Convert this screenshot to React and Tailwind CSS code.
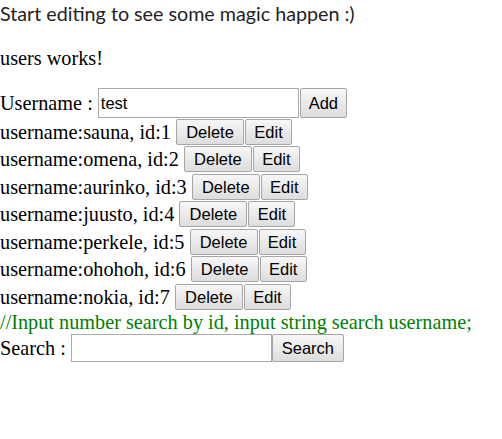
import React, { useState } from "react";

const users = [
  { id: 1, name: "sauna" },
  { id: 2, name: "omena" },
  { id: 3, name: "aurinko" },
  { id: 4, name: "juusto" },
  { id: 5, name: "perkele" },
  { id: 6, name: "ohohoh" },
  { id: 7, name: "nokia" },
];

const btn =
  "h-[26px] bg-gradient-to-b from-[#f7f7f7] to-[#dddddd] border border-[#a6a6a6] rounded-[2px] text-[16.5px] text-black font-['Liberation_Sans',Arial,sans-serif] leading-none flex items-center justify-center";

const input =
  "h-[28px] w-[201px] border border-[#a9a9a9] bg-white px-[2px] text-[16.5px] text-black font-['Liberation_Sans',Arial,sans-serif] outline-none";

function App() {
  const [username, setUsername] = useState("test");
  const [search, setSearch] = useState("");

  return (
    <div className="w-[502px] h-[439px] bg-white text-black font-['Liberation_Serif','Times_New_Roman',serif] text-[20.25px]">
      <p className="font-['Lato',sans-serif] text-[19.7px] leading-[24px] text-[#222] pt-[2px] mb-[21px]">
        Start editing to see some magic happen :)
      </p>

      <p className="leading-[23px] mb-[18px]">users works!</p>

      <div className="h-[30px] flex items-center">
        <span className="whitespace-pre">Username : </span>
        <input
          className={input + " h-[30px]"}
          value={username}
          onChange={(e) => setUsername(e.target.value)}
        />
        <button className={btn + " w-[47px] h-[30px] ml-[1px]"}>Add</button>
      </div>

      {users.map((u) => (
        <div key={u.id} className="h-[27.5px] flex items-center">
          <span className="whitespace-pre">
            username:{u.name}, id:{u.id}{" "}
          </span>
          <button className={btn + " w-[68px]"}>Delete</button>
          <button className={btn + " w-[47px] ml-[1px]"}>Edit</button>
        </div>
      ))}

      <div className="leading-[23px] text-[#008000]">
        //Input number search by id, input string search username;
      </div>

      <div className="h-[29px] flex items-center">
        <span className="whitespace-pre">Search : </span>
        <input
          className={input}
          value={search}
          onChange={(e) => setSearch(e.target.value)}
        />
        <button className={btn + " w-[72px] h-[28px]"}>Search</button>
      </div>
    </div>
  );
}

export default App;
